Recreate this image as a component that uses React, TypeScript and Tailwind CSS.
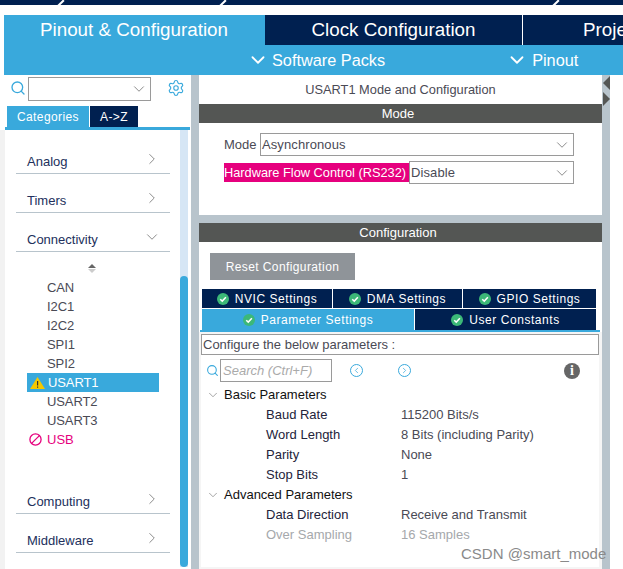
import { ChevronDown, ChevronRight, Search, Settings, ChevronLeft } from 'lucide-react'

const navy = 'bg-[#002050]'

function Category({ name, open, className }: { name: string; open?: boolean; className?: string }) {
  return (
    <div className={`flex h-[20px] items-center justify-between border-b border-[#b8c4cc] box-content py-[1px] pl-[11px] pr-[9px] text-[13px] text-[#22305c] ${className ?? ''}`}>
      <span>{name}</span>
      {open ? (
        <ChevronDown size={18} strokeWidth={1} className="text-[#666] mb-[7px]" />
      ) : (
        <ChevronRight size={18} strokeWidth={1} className="text-[#666] mb-[7px]" />
      )}
    </div>
  )
}

function Peripheral({ name }: { name: string }) {
  return <div className="h-[19px] pl-[20px] text-[13px] tracking-[-0.1px] leading-[19px] text-[#4a4a55]">{name}</div>
}

function Check() {
  return (
    <svg width="12" height="12" viewBox="0 0 13 13" className="shrink-0">
      <circle cx="6.5" cy="6.5" r="6.5" fill="#3cb878" />
      <path d="M3.5 6.7 5.7 8.8 9.6 4.6" fill="none" stroke="#fff" strokeWidth="1.6" />
    </svg>
  )
}

function SubTab({ label, className, active }: { label: string; className: string; active?: boolean }) {
  return (
    <div className={`flex items-center justify-center gap-[6px] text-[12px] tracking-[0.55px] text-white ${active ? 'bg-[#39a9dc]' : navy} ${className}`}>
      <Check />
      <span>{label}</span>
    </div>
  )
}

function Select({ value, className }: { value: string; className: string }) {
  return (
    <div className={`flex items-center justify-between border border-[#9a9a9a] bg-white pl-[1px] pr-[2px] text-[13px] tracking-[0.1px] text-[#4a4a55] ${className}`}>
      <span>{value}</span>
      <ChevronDown size={18} strokeWidth={1} className="text-[#666]" />
    </div>
  )
}

function Param({ label, value, muted }: { label: string; value: string; muted?: boolean }) {
  return (
    <div className={`flex h-[20px] items-center pl-[65px] text-[13px] ${muted ? 'text-[#a5a8ab]' : ''}`}>
      <span className={`w-[135px] ${muted ? '' : 'text-[#23233a]'}`}>{label}</span>
      <span className={muted ? '' : 'text-[#4a4a55]'}>{value}</span>
    </div>
  )
}

function Group({ label }: { label: string }) {
  return (
    <div className="flex h-[20px] items-center pl-[5px] text-[13px] text-[#111]">
      <ChevronDown size={14} strokeWidth={1} className="mr-[4px] text-[#666]" />
      <span>{label}</span>
    </div>
  )
}

export default function App() {
  return (
    <div className="relative h-[569px] w-[623px] overflow-hidden bg-white font-['Liberation_Sans',Arial,sans-serif]">
      <div className={`relative h-[5px] ${navy}`}>
        <div className="absolute left-[60px] top-[-1px] h-[8px] w-[2px] rotate-45 bg-white" />
        <div className="absolute left-[222px] top-[-1px] h-[8px] w-[2px] rotate-45 bg-white" />
        <div className="absolute left-[555px] top-[-1px] h-[8px] w-[2px] rotate-45 bg-white" />
      </div>
      <div className="h-[10px]" />

      <div className="ml-[4px] bg-[#39a9dc]">
        <div className="flex h-[30px] text-[18.8px] text-white">
          <div className="flex w-[260px] items-center justify-center">Pinout &amp; Configuration</div>
          <div className={`ml-[1px] flex w-[258px] items-center justify-center border-r border-white ${navy}`}>Clock Configuration</div>
          <div className={`flex flex-1 items-center pl-[60px] whitespace-nowrap overflow-hidden ${navy}`}>Project Manager</div>
        </div>
        <div className="flex h-[30px] items-center text-[16.3px] text-white">
          <ChevronDown size={22} strokeWidth={2} className="ml-[243px]" />
          <span className="ml-[3px]">Software Packs</span>
          <ChevronDown size={22} strokeWidth={2} className="ml-[121px]" />
          <span className="ml-[4px]">Pinout</span>
        </div>
      </div>

      <div className="flex h-[494px]">
        <div className="w-[191px] shrink-0">
          <div className="mb-[5px] flex h-[26px] items-start pl-[10px] pt-[2px]">
            <Search size={16} strokeWidth={2} className="mt-[3px] text-[#39a9dc]" />
            <div className="ml-[2px] flex h-[24px] w-[123px] items-center justify-end border border-[#9a9a9a] pr-[2px]">
              <ChevronDown size={18} strokeWidth={1} className="text-[#666]" />
            </div>
            <Settings size={18} strokeWidth={1.5} className="ml-[16px] mt-[2px] text-[#39a9dc]" />
          </div>
          <div className="flex h-[21px] pl-[7px] text-[12px] tracking-[0.4px] text-white">
            <div className="flex w-[82px] items-center justify-center bg-[#39a9dc]">Categories</div>
            <div className={`ml-[1px] flex w-[48px] items-center justify-center ${navy}`}>A-&gt;Z</div>
          </div>
          <div className="ml-[5px] h-[3px] w-[185px] bg-[#39a9dc]" />
          <div className="flex h-[439px]">
            <div className="w-[5px] bg-[#f2f2f2]" />
            <div className="w-[175px] pl-[11px] pr-[10px]">
              <Category name="Analog" className="mt-[21px]" />
              <Category name="Timers" className="mt-[16px]" />
              <Category name="Connectivity" open className="mt-[16px]" />
              <div className="flex h-[26px] flex-col items-center justify-center pr-[3px] pt-[6px]">
                <div className="h-0 w-0 border-x-[4px] border-b-[4px] border-x-transparent border-b-[#666]" />
                <div className="mt-[1px] h-0 w-0 border-x-[4px] border-t-[4px] border-x-transparent border-t-[#ccc]" />
              </div>
              <div className="pl-[11px]">
                <Peripheral name="CAN" />
                <Peripheral name="I2C1" />
                <Peripheral name="I2C2" />
                <Peripheral name="SPI1" />
                <Peripheral name="SPI2" />
                <div className="relative h-[19px] w-[132px] bg-[#39a9dc] pl-[21px] text-[13px] tracking-[-0.1px] leading-[19px] text-white">
                  <svg width="15" height="12" viewBox="0 0 15 12" className="absolute left-[3px] top-[4px]">
                    <path d="M7.5 0 15 12H0Z" fill="#f5c800" />
                    <path d="M7 4h1.2v4.4H7zM7 9.4h1.2v1.3H7z" fill="#333" />
                  </svg>
                  USART1
                </div>
                <Peripheral name="USART2" />
                <Peripheral name="USART3" />
                <div className="relative h-[19px] pl-[20px] text-[13px] leading-[19px] text-[#e6007e]">
                  <svg width="13" height="13" viewBox="0 0 13 13" className="absolute left-[2px] top-[3px]">
                    <circle cx="6.5" cy="6.5" r="5.6" fill="none" stroke="#e6007e" strokeWidth="1.3" />
                    <path d="M2.6 10.4 10.4 2.6" stroke="#e6007e" strokeWidth="1.3" />
                  </svg>
                  USB
                </div>
              </div>
              <Category name="Computing" className="mt-[42px]" />
              <Category name="Middleware" className="mt-[16px]" />
            </div>
            <div className="flex h-[437px] w-[8px] flex-col bg-[#d6e6f5]">
              <div className="mt-[146px] flex-1 rounded-[4px] bg-[#39a9dc]" />
            </div>
            <div className="w-[3px]" />
          </div>
        </div>

        <div className="w-[8px] shrink-0 bg-[#b8c4cc]" />

        <div className="flex w-[403px] shrink-0 flex-col bg-[#b8c4cc]">
          <div className="h-[140px] bg-white">
            <div className="flex h-[29px] items-center justify-center text-[12.8px] text-[#4a4a55]">USART1 Mode and Configuration</div>
            <div className="flex h-[19px] items-center justify-center bg-[#545654] pr-[5px] text-[13px] text-white">Mode</div>
            <div className="mt-[10px] flex h-[23px] items-center pl-[25px]">
              <span className="w-[36px] text-[13px] text-[#4a4a55]">Mode</span>
              <Select value="Asynchronous" className="h-[23px] w-[314px]" />
            </div>
            <div className="mt-[5px] flex h-[23px] items-center pl-[25px]">
              <span className="flex h-[19px] w-[185px] items-center bg-[#e6007e] text-[12.8px] text-white whitespace-nowrap">Hardware Flow Control (RS232)</span>
              <Select value="Disable" className="h-[23px] w-[165px]" />
            </div>
          </div>
          <div className="mt-[8px] flex h-[19px] items-center justify-center bg-[#545654] pr-[5px] text-[13px] text-white">Configuration</div>
          <div className="flex flex-1 flex-col bg-white">
            <div className="ml-[11px] mt-[11px] flex h-[27px] w-[145px] items-center justify-center bg-[#8f9499] text-[12px] tracking-[0.4px] text-white">Reset Configuration</div>
            <div className="ml-[3px] mt-[9px] flex h-[19px] gap-[1px]">
              <SubTab label="NVIC Settings" className="w-[130px]" />
              <SubTab label="DMA Settings" className="w-[129px]" />
              <SubTab label="GPIO Settings" className="w-[133px]" />
            </div>
            <div className="ml-[3px] mt-[1px] flex h-[21px] gap-[1px]">
              <SubTab label="Parameter Settings" active className="w-[212px]" />
              <SubTab label="User Constants" className="w-[181px]" />
            </div>
            <div className="ml-[1px] h-[2px] w-[400px] bg-[#39a9dc]" />
            <div className="flex-1 bg-[#f5f5f5] pl-[2px] pr-[3px] pt-[2px] pb-[2px]">
              <div className="h-full bg-white">
                <div className="flex h-[21px] w-[398px] items-center border border-[#9a9a9a] pl-[1px] text-[13px] text-[#4a4a55]">Configure the below parameters :</div>
                <div className="flex h-[30px] items-center pt-[1px]">
                  <Search size={13} strokeWidth={2} className="ml-[5px] text-[#39a9dc]" />
                  <div className="ml-[1px] flex h-[23px] w-[112px] items-center border border-[#9a9a9a] bg-white pl-[2px] text-[13px] italic text-[#aaa]">Search (Ctrl+F)</div>
                  <div className="ml-[18px] flex h-[13px] w-[13px] items-center justify-center rounded-full border border-[#39a9dc]">
                    <ChevronLeft size={9} strokeWidth={2} className="text-[#39a9dc]" />
                  </div>
                  <div className="ml-[35px] flex h-[13px] w-[13px] items-center justify-center rounded-full border border-[#39a9dc]">
                    <ChevronRight size={9} strokeWidth={2} className="text-[#39a9dc]" />
                  </div>
                  <div className="ml-[153px] flex h-[16px] w-[16px] items-center justify-center rounded-full bg-[#666] font-['Liberation_Serif',serif] text-[14px] font-bold text-white">i</div>
                </div>
                <div>
                  <Group label="Basic Parameters" />
                  <Param label="Baud Rate" value="115200 Bits/s" />
                  <Param label="Word Length" value="8 Bits (including Parity)" />
                  <Param label="Parity" value="None" />
                  <Param label="Stop Bits" value="1" />
                  <Group label="Advanced Parameters" />
                  <Param label="Data Direction" value="Receive and Transmit" />
                  <Param label="Over Sampling" value="16 Samples" muted />
                </div>
              </div>
            </div>
          </div>
        </div>

        <div className="relative h-full w-[8px] shrink-0 bg-[#b8c4cc]">
          <div className="absolute left-[1px] top-[1px] h-0 w-0 border-y-[7px] border-r-[7px] border-y-transparent border-r-[#545654]" />
          <div className="absolute left-[1px] top-[17px] h-0 w-0 border-y-[7px] border-l-[7px] border-y-transparent border-l-[#545654]" />
        </div>
      </div>

      <div className="absolute left-[461px] top-[543px] text-[15px] text-[#8a8a8a]">CSDN @smart_mode</div>
    </div>
  )
}
